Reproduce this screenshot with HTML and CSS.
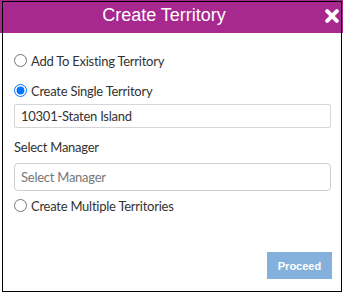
FILE: index.html
```html
<!DOCTYPE html>
<html>
<head>
<meta charset="utf-8">
<title>Create Territory</title>
<link rel="stylesheet" href="styles.css">
</head>
<body>
<div class="dialog">
  <div class="dialog-head">
    <span class="dialog-title">Create Territory</span>
    <svg class="dialog-close" width="14" height="14" viewBox="0 0 14 14">
      <path d="M2.2 2.2L11.8 11.8M11.8 2.2L2.2 11.8" stroke="#fff" stroke-width="4" stroke-linecap="round"/>
    </svg>
  </div>
  <form class="dialog-body">
    <label class="opt"><input type="radio" name="mode"> Add To Existing Territory</label>
    <label class="opt opt-2"><input type="radio" name="mode" checked> Create Single Territory</label>
    <input class="field field-name" type="text" value="10301-Staten Island">
    <div class="field-label">Select Manager</div>
    <input class="field field-manager" type="text" placeholder="Select Manager">
    <label class="opt opt-3"><input type="radio" name="mode"> Create Multiple Territories</label>
    <div class="actions">
      <button type="button" class="btn-proceed">Proceed</button>
    </div>
  </form>
  <div class="frame"></div>
</div>
</body>
</html>
```
FILE: styles.css
```css
body {
margin: 0;
background: #fff;
}
.dialog {
position: relative;
width: 343px;
height: 294px;
font-family: "Lato", sans-serif;
font-size: 13px;
letter-spacing: -0.25px;
color: #333;
}
.dialog-head {
display: flex;
align-items: center;
height: 33px;
padding-left: 3px;
background: #a7288f;
}
.dialog-title {
flex: 1;
text-align: center;
font-family: "Liberation Sans", Arial, sans-serif;
font-size: 18px;
letter-spacing: 0;
line-height: 30px;
margin-bottom: 3px;
color: #fff;
}
.dialog-close {
margin: 0 4px 2px 0;
}
.dialog-body {
display: flex;
flex-direction: column;
padding: 17px 12px 0 14px;
}
.opt {
display: flex;
align-items: center;
height: 21px;
}
.opt input {
width: 13px;
height: 13px;
margin: 0 4px 0 0;
accent-color: #0075ff;
}
.opt-2 {
margin-top: 9px;
}
.field {
box-sizing: border-box;
width: 100%;
margin: 0;
padding: 0 6px;
font-family: "Lato", sans-serif;
font-size: 13px;
letter-spacing: -0.25px;
color: #333;
background: #fff;
border: 1px solid #d6d6d6;
border-radius: 2px;
outline: none;
}
.field-name {
height: 24px;
margin-top: 3px;
}
.field-label {
height: 20px;
line-height: 20px;
margin-top: 9px;
}
.field-manager {
height: 28px;
margin-top: 6px;
border-color: #cfcfcf;
border-radius: 4px;
}
.field-manager::placeholder {
color: #777;
}
.opt-3 {
margin-top: 4px;
}
.actions {
display: flex;
justify-content: flex-end;
margin: 36px -1px 0 0;
}
.btn-proceed {
width: 65px;
height: 27px;
border: 0;
padding: 0;
background: #84b1dc;
color: #fff;
font-family: "Liberation Sans", Arial, sans-serif;
font-size: 11px;
font-weight: bold;
letter-spacing: 0;
}
.frame {
position: absolute;
left: 2px;
top: 1px;
width: 338px;
height: 289px;
border: 1px solid #000;
pointer-events: none;
}
```
